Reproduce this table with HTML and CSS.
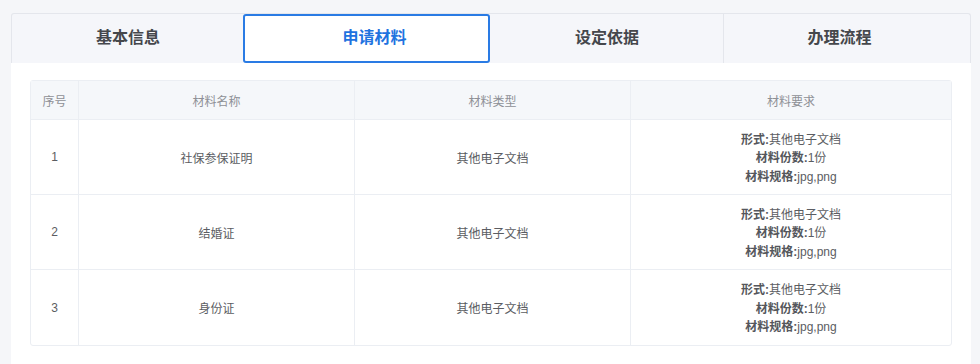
FILE: index.html
```html
<!DOCTYPE html>
<html lang="zh-CN">
<head>
<meta charset="utf-8">
<title>申请材料</title>
<link rel="stylesheet" href="styles.css">
</head>
<body>
<div class="wrap">
  <div class="tabs">
    <div class="tab tab-first">基本信息</div>
    <div class="tab tab-active">申请材料</div>
    <div class="tab">设定依据</div>
    <div class="tab tab-last">办理流程</div>
  </div>
  <div class="panel">
    <table class="mtable">
      <colgroup>
        <col class="c-seq"><col class="c-name"><col class="c-type"><col class="c-req">
      </colgroup>
      <thead>
        <tr><th>序号</th><th>材料名称</th><th>材料类型</th><th>材料要求</th></tr>
      </thead>
      <tbody>
        <tr>
          <td>1</td><td>社保参保证明</td><td>其他电子文档</td>
          <td class="req"><div><b>形式:</b>其他电子文档</div><div><b>材料份数:</b>1份</div><div><b>材料规格:</b>jpg,png</div></td>
        </tr>
        <tr>
          <td>2</td><td>结婚证</td><td>其他电子文档</td>
          <td class="req"><div><b>形式:</b>其他电子文档</div><div><b>材料份数:</b>1份</div><div><b>材料规格:</b>jpg,png</div></td>
        </tr>
        <tr>
          <td>3</td><td>身份证</td><td>其他电子文档</td>
          <td class="req"><div><b>形式:</b>其他电子文档</div><div><b>材料份数:</b>1份</div><div><b>材料规格:</b>jpg,png</div></td>
        </tr>
      </tbody>
    </table>
  </div>
</div>
</body>
</html>
```
FILE: styles.css
```css
html, body {
  margin: 0;
  padding: 0;
  background: #f5f6f9;
  font-family: "Liberation Sans", "Noto Sans CJK SC", sans-serif;
}
.wrap {
  width: 960px;
  margin: 13px 0 0 11px;
}
.tabs {
  display: grid;
  grid-template-columns: 232px 247px 232px 249px;
  height: 50px;
  box-sizing: border-box;
  border: 1px solid #e4e6ec;
  border-bottom: none;
  border-radius: 3px 3px 0 0;
  background: #f5f6fa;
}
.tab {
  display: flex;
  align-items: center;
  justify-content: center;
  font-family: "Noto Sans CJK SC", sans-serif;
  font-size: 16px;
  line-height: 1;
  font-weight: bold;
  color: #45474c;
  box-sizing: border-box;
  padding-bottom: 5px;
}
.tab-active {
  background: #fff;
  border: 2px solid #2a7be4;
  border-radius: 3px;
  color: #1f73df;
  margin: 0 1px 0 -1px;
  padding-left: 16px;
}
.tab-last {
  border-left: 1px solid #e4e6ec;
  padding-right: 17px;
}
.panel {
  background: #fff;
  padding: 17px 21px 19px 19px;
}
.mtable {
  width: 920px;
  border-collapse: separate;
  border-spacing: 0;
  table-layout: fixed;
  border: 1px solid #ebeef3;
  border-radius: 3px;
  font-size: 12px;
  color: #5b5d62;
}
.c-seq { width: 48px; }
.c-name { width: 276px; }
.c-type { width: 276px; }
.c-req { width: 320px; }
.mtable th {
  height: 38px;
  background: #f5f7fa;
  font-weight: normal;
  color: #8e9096;
  font-size: 12px;
  border-bottom: 1px solid #ebeef3;
  border-right: 1px solid #ebeef3;
  padding: 0;
}
.mtable td {
  height: 74px;
  text-align: center;
  vertical-align: middle;
  border-bottom: 1px solid #ebeef3;
  border-right: 1px solid #ebeef3;
  padding: 0;
}
.mtable tr > :last-child { border-right: none; }
.mtable tbody tr:last-child td { border-bottom: none; height: 75px; }
.mtable td.req { line-height: 18.5px; padding-top: 3px; height: 71px; }
.mtable tbody tr:last-child td.req { height: 72px; }
.req b { font-weight: bold; color: #55575c; }
```
